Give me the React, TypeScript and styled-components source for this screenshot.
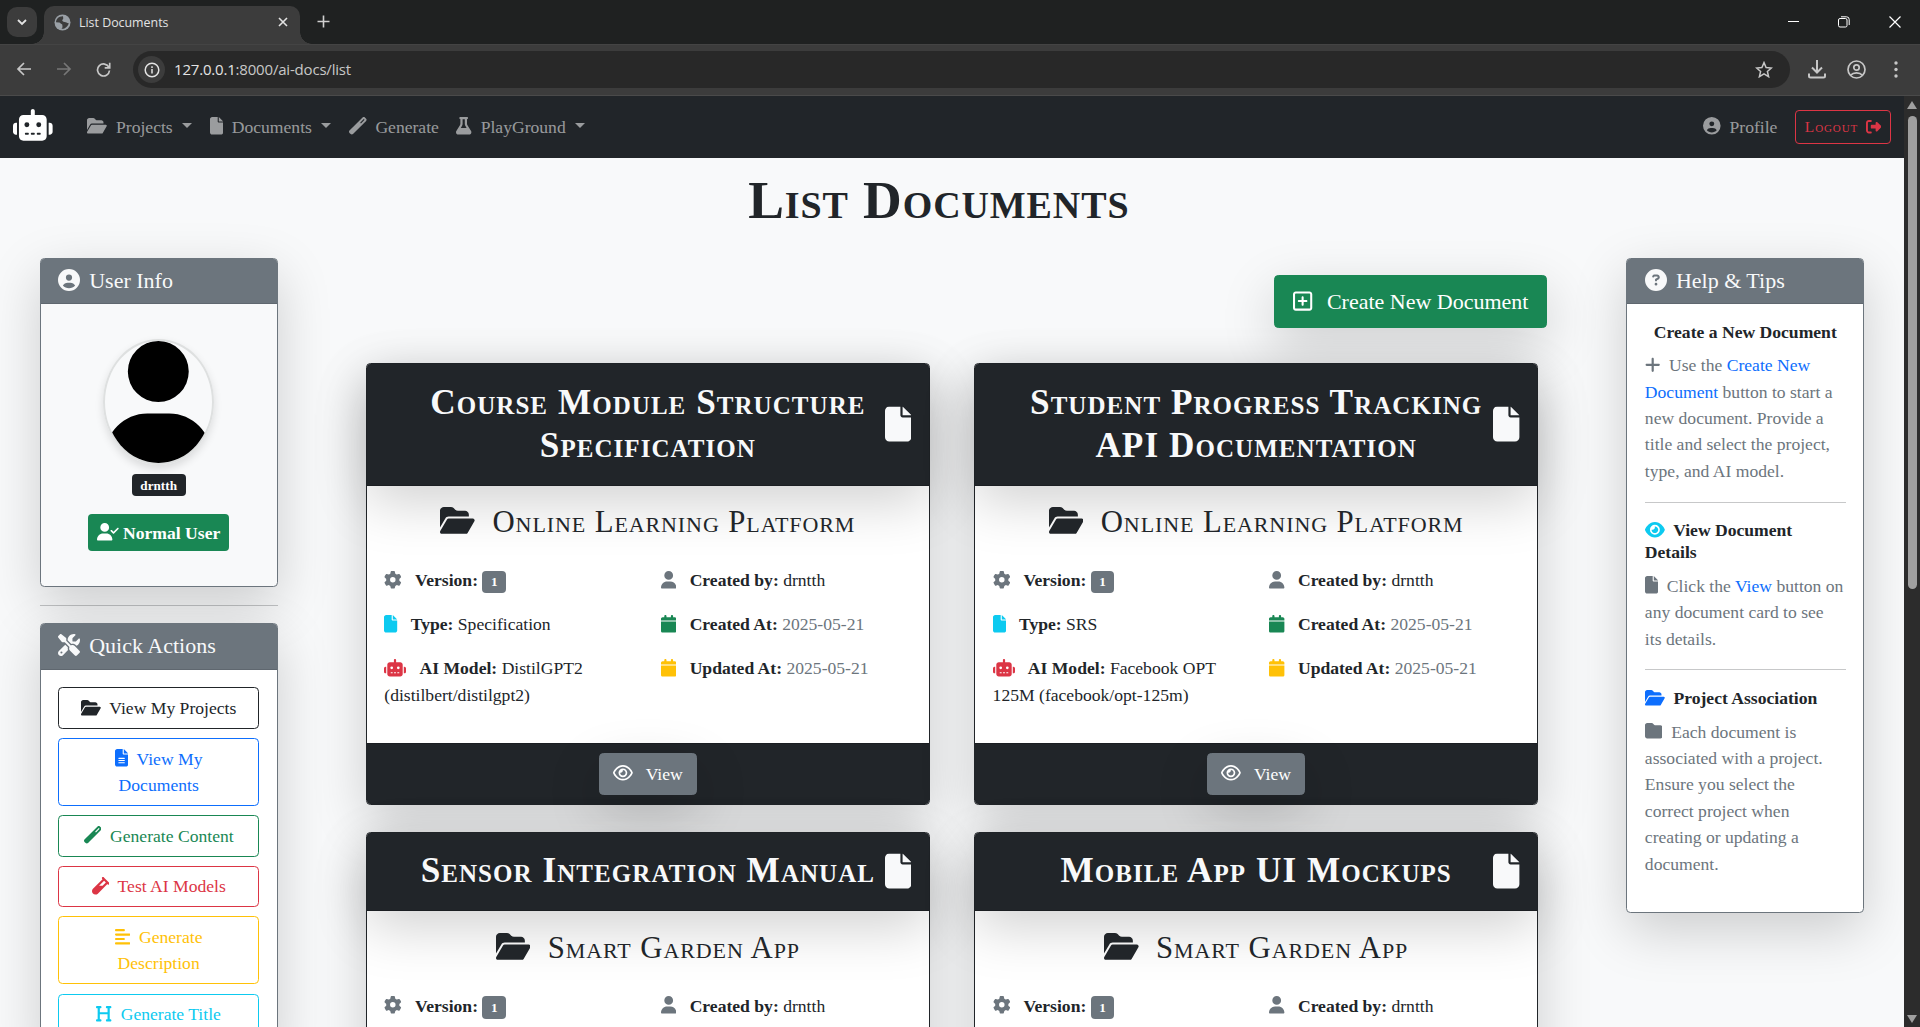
import React from "react";
import styled, { createGlobalStyle, css } from "styled-components";
import {
  FaAlignLeft, FaCalendar, FaCircleQuestion, FaCircleUser, FaEye, FaFile, FaFileLines, FaFlask,
  FaFolder, FaFolderOpen, FaGear, FaHeading, FaPlus, FaRegEye, FaRegSquarePlus, FaRightFromBracket,
  FaRobot, FaScrewdriverWrench, FaUser, FaUserCheck, FaVial, FaWandMagic,
} from "react-icons/fa6";

const dark = "#212529";
const secondary = "#6c757d";
const green = "#198754";
const blue = "#0d6efd";
const red = "#dc3545";
const yellow = "#ffc107";
const cyan = "#0dcaf0";
const light = "#f8f9fa";

const shadowLg = css`
  box-shadow: 0 1rem 3rem rgba(0, 0, 0, 0.175);
`;

const Global = createGlobalStyle`
  *, *::before, *::after { box-sizing: border-box; }
  html { font-size: 17.6px; }
  body {
    margin: 0;
    overflow: hidden;
    font-family: "Liberation Serif", "Times New Roman", serif;
    font-size: 1rem;
    line-height: 1.5;
    color: ${dark};
    background: ${light};
  }
  h1, h2, h3, h4, h5, p, hr { margin: 0; font-weight: 400; line-height: 1.2; }
  p { line-height: 1.5; }
`;

const Window = styled.div`
  height: 1027px;
  display: flex;
  flex-direction: column;
  overflow: hidden;
`;

/* ---------- browser chrome ---------- */

const TabStrip = styled.div`
  flex: none;
  height: 44px;
  display: flex;
  align-items: flex-start;
  background: #1f2121;
  padding-left: 7px;
  color: #e3e3e3;
  font-family: "Open Sans", "Noto Sans", sans-serif;
`;

const TabSearch = styled.div`
  width: 30px;
  height: 30px;
  margin-top: 7px;
  border-radius: 10px;
  background: #3c3c3c;
  display: grid;
  place-items: center;
`;

const Tab = styled.div`
  position: relative;
  width: 256px;
  height: 38px;
  margin: 6px 0 0 7px;
  padding: 0 12px 6px 10px;
  border-radius: 10px 10px 0 0;
  background: #3c3c3c;
  display: flex;
  align-items: center;
  gap: 8px;
  font-size: 12.4px;
  &::before, &::after {
    content: "";
    position: absolute;
    bottom: 0;
    width: 12px;
    height: 12px;
  }
  &::before {
    left: -12px;
    background: radial-gradient(circle at 0 0, transparent 11.5px, #3c3c3c 12px);
  }
  &::after {
    right: -12px;
    background: radial-gradient(circle at 100% 0, transparent 11.5px, #3c3c3c 12px);
  }
`;

const TabTitle = styled.span`
  flex: 1;
  padding-top: 2px;
`;

const NewTab = styled.div`
  display: flex;
  margin: 15px 0 0 17px;
`;

const WindowControls = styled.div`
  margin-left: auto;
  margin-right: 19px;
  height: 44px;
  display: flex;
  align-items: center;
  gap: 39px;
`;

const Toolbar = styled.div`
  flex: none;
  height: 52px;
  display: flex;
  align-items: center;
  padding: 0 15px 0 16px;
  background: #3c3c3c;
  border-bottom: 1px solid #4a4a4a;
  box-shadow: inset 0 1px 0 #444;
  color: #c7c7c7;
`;

const NavButtons = styled.div`
  display: flex;
  gap: 24px;
  width: 117px;
`;

const AddressBar = styled.div`
  flex: 1;
  height: 37px;
  border-radius: 19px;
  background: #282828;
  display: flex;
  align-items: center;
  padding: 0 17px 0 5px;
  color: #e3e3e3;
  font: 15px/20px "Open Sans", "Noto Sans", sans-serif;
`;

const SiteInfo = styled.span`
  width: 27px;
  height: 27px;
  border-radius: 50%;
  background: #3c3c3c;
  display: grid;
  place-items: center;
  margin-right: 9px;
`;

const Url = styled.span`
  flex: 1;
  letter-spacing: -0.19px;
  padding-bottom: 1px;
  span { color: #c7c7c7; }
`;

const ToolbarActions = styled.div`
  display: flex;
  align-items: center;
  gap: 20px;
  margin-left: 17px;
`;

/* ---------- page ---------- */

const Viewport = styled.div`
  flex: 1;
  min-height: 0;
  display: flex;
`;

const Page = styled.div`
  width: 1904px;
  overflow: hidden;
`;

const ScrollTrack = styled.div`
  width: 16px;
  background: #2c2c2c;
  display: flex;
  flex-direction: column;
  align-items: center;
  padding: 5px 0 4px;
`;

const ScrollThumb = styled.div`
  width: 9px;
  height: 473px;
  margin: 7px 0 auto;
  border-radius: 5px;
  background: #9f9f9f;
`;

const Navbar = styled.nav`
  height: 61.6px;
  background: ${dark};
  color: rgba(255, 255, 255, 0.55);
  display: flex;
  align-items: center;
  padding: 0 13.2px;
`;

const Brand = styled.div`
  display: flex;
  color: #fff;
  font-size: 31.7px;
  margin-right: 25.8px;
`;

/* $w is the width of the icon's 512-unit-high drawing */
const Glyph = styled.span<{ $color?: string; $gap?: number; $w?: number }>`
  color: ${(p) => p.$color || "inherit"};
  margin-right: ${(p) => p.$gap ?? 0.5}rem;
  svg {
    height: 1em;
    width: ${(p) => (p.$w ?? 512) / 512}em;
    vertical-align: -0.125em;
  }
`;

const NavItem = styled.div<{ $caret?: boolean }>`
  padding: 0 0.5rem;
  white-space: nowrap;
  ${(p) =>
    p.$caret &&
    css`
      &::after {
        content: "";
        display: inline-block;
        margin-left: 9.5px;
        vertical-align: 0.255em;
        border-top: 0.3em solid;
        border-left: 0.3em solid transparent;
        border-right: 0.3em solid transparent;
      }
    `}
`;

const NavEnd = styled.div`
  display: flex;
  align-items: center;
  gap: 8.8px;
  margin-left: auto;
`;

const LogoutButton = styled.div`
  height: 34px;
  padding: 4.4px 8.8px;
  border: 1px solid ${red};
  border-radius: 4px;
  color: ${red};
  font-size: 15.4px;
  line-height: 23.1px;
  font-variant: small-caps;
  letter-spacing: 0.9px;
  display: flex;
  align-items: center;
  gap: 7.5px;
`;

const PageTitle = styled.h1`
  margin-top: 11px;
  padding-right: 26.4px;
  text-align: center;
  font-size: 53.6px;
  line-height: 63.4px;
  font-weight: 700;
  font-variant: small-caps;
  letter-spacing: 0.9px;
`;

const Columns = styled.div`
  display: grid;
  grid-template-columns: 317.33px 1fr 317.33px;
  align-items: start;
  margin-top: 26px;
`;

const SideColumn = styled.aside`
  padding: 0 39.6px;
`;

const MainColumn = styled.main`
  padding: 17px 39.6px 0;
`;

const Divider = styled.hr`
  border: 0;
  border-top: 1px solid ${dark};
  opacity: 0.25;
  margin: 1rem 0;
`;

const Card = styled.section<{ $border: string; $bg?: string }>`
  ${shadowLg}
  border: 1px solid ${(p) => p.$border};
  border-radius: 4.4px;
  background: ${(p) => p.$bg || "#fff"};
`;

const SideHeader = styled.h5<{ $h?: number }>`
  height: ${(p) => p.$h ?? 45}px;
  padding: 0.5rem 1rem;
  border-bottom: 1px solid #5f676f;
  background: ${secondary};
  color: ${light};
  font-size: 1.25rem;
  border-radius: 3.4px 3.4px 0 0;
  white-space: nowrap;
`;

const SideBody = styled.div`
  padding: 1rem;
`;

const Profile = styled.div`
  height: 282px;
  padding-top: 35px;
  display: flex;
  flex-direction: column;
  align-items: center;
`;

const Avatar = styled.div`
  flex: none;
  width: 110.6px;
  height: 126px;
  margin-bottom: 9px;
  border: 2px solid #dee0e0;
  border-radius: 50%;
  overflow: hidden;
  box-shadow: 0 4px 8px rgba(0, 0, 0, 0.12);
  color: #000;
  svg { display: block; width: 100%; height: 100%; }
`;

const Badge = styled.span<{ $bg: string }>`
  display: inline-block;
  padding: 0.35em 0.65em;
  font-size: 0.75em;
  font-weight: 700;
  line-height: 1;
  color: #fff;
  text-align: center;
  vertical-align: baseline;
  border-radius: 4px;
  background: ${(p) => p.$bg};
`;

const RoleBadge = styled.div`
  margin-top: 18px;
  height: 37px;
  padding: 0 8.8px;
  display: flex;
  align-items: center;
  gap: 4px;
  border-radius: 4px;
  background: ${green};
  color: #fff;
  font-weight: 700;
  white-space: nowrap;
`;

const ActionList = styled.div`
  display: grid;
  gap: 9.1px;
  padding: 1rem;
`;

const OutlineButton = styled.div<{ $color: string }>`
  padding: 0.375rem 0.95rem;
  border: 1px solid ${(p) => p.$color};
  border-radius: 4.4px;
  color: ${(p) => p.$color};
  text-align: center;
`;

const CreateRow = styled.div`
  display: flex;
  justify-content: flex-end;
  margin-bottom: 35.2px;
`;

const CreateButton = styled.div`
  ${shadowLg}
  padding: 0.5rem 1rem 0.5rem 18.4px;
  border: 1px solid ${green};
  border-radius: 4.4px;
  background: ${green};
  color: #fff;
  font-size: 1.25rem;
  line-height: 33.4px;
  white-space: nowrap;
`;

const CardGrid = styled.div`
  display: grid;
  grid-template-columns: 1fr 1fr;
  gap: 26.4px 44px;
  margin: 0 8.8px;
`;

const DocHeader = styled.header`
  ${shadowLg}
  position: relative;
  padding: 17.8px 1rem 17px;
  border-bottom: 1px solid #1b1e22;
  border-radius: 3.4px 3.4px 0 0;
  background: ${dark};
  color: ${light};
`;

const DocTitle = styled.h2`
  padding: 0 10px;
  font-size: 2rem;
  line-height: 42.9px;
  font-weight: 700;
  font-variant: small-caps;
  letter-spacing: 1.05px;
  text-align: center;
`;

const CornerIcon = styled.span`
  position: absolute;
  top: 50%;
  right: 1rem;
  transform: translateY(-50%);
  display: flex;
  font-size: 2rem;
  svg { height: 1em; width: 0.75em; }
`;

const DocBody = styled.div`
  position: relative;
  padding: 1rem;
`;

const ProjectName = styled.h3`
  font-size: 1.75rem;
  line-height: 38px;
  font-variant: small-caps;
  letter-spacing: 0.9px;
  text-align: center;
  margin-bottom: 26px;
`;

const MetaGrid = styled.div`
  display: grid;
  grid-template-columns: 1fr 1fr;
  column-gap: 26.4px;
`;

const Meta = styled.p`
  margin-bottom: 1rem;
`;

const Muted = styled.span`
  color: ${secondary};
`;

const DocFooter = styled.footer`
  padding: 0.5rem 1rem;
  border-top: 1px solid #1b1e22;
  border-radius: 0 0 3.4px 3.4px;
  background: ${dark};
  display: flex;
  justify-content: center;
`;

const ViewButton = styled.div`
  ${shadowLg}
  padding: 0.375rem 0.75rem;
  border: 1px solid ${secondary};
  border-radius: 4.4px;
  background: ${secondary};
  color: #fff;
  line-height: 27px;
`;

const TipTitle = styled.h5<{ $indent?: boolean }>`
  font-weight: 700;
  font-size: 1rem;
  line-height: 21.8px;
  margin-bottom: 0.5rem;
  padding-left: ${(p) => (p.$indent ? "9px" : 0)};
`;

const TipText = styled.p`
  color: ${secondary};
  margin-bottom: 1rem;
`;

const Link = styled.span`
  color: ${blue};
`;

/* ---------- data ---------- */

type Doc = { title: string; project: string; type: string; model: string };

const docs: Doc[] = [
  { title: "Course Module Structure Specification", project: "Online Learning Platform", type: "Specification", model: "DistilGPT2 (distilbert/distilgpt2)" },
  { title: "Student Progress Tracking API Documentation", project: "Online Learning Platform", type: "SRS", model: "Facebook OPT 125M (facebook/opt-125m)" },
  { title: "Sensor Integration Manual", project: "Smart Garden App", type: "Manual", model: "DistilGPT2 (distilbert/distilgpt2)" },
  { title: "Mobile App UI Mockups", project: "Smart Garden App", type: "Design", model: "DistilGPT2 (distilbert/distilgpt2)" },
];

const actions = [
  { label: "View My Projects", color: dark, icon: <FaFolderOpen />, w: 576 },
  { label: "View My Documents", color: blue, icon: <FaFileLines />, w: 384 },
  { label: "Generate Content", color: green, icon: <FaWandMagic />, w: 512 },
  { label: "Test AI Models", color: red, icon: <FaVial />, w: 512 },
  { label: "Generate Description", color: yellow, icon: <FaAlignLeft />, w: 448 },
  { label: "Generate Title", color: cyan, icon: <FaHeading />, w: 448 },
];

function DocumentCard({ doc }: { doc: Doc }) {
  return (
    <Card $border={dark}>
      <DocHeader>
        <DocTitle>{doc.title}</DocTitle>
        <CornerIcon><FaFile /></CornerIcon>
      </DocHeader>
      <DocBody>
        <ProjectName><Glyph $w={576}><FaFolderOpen /></Glyph> {doc.project}</ProjectName>
        <MetaGrid>
          <div>
            <Meta><Glyph $color={secondary}><FaGear /></Glyph> <b>Version:</b> <Badge $bg={secondary}>1</Badge></Meta>
            <Meta><Glyph $w={384} $color={cyan}><FaFile /></Glyph> <b>Type:</b> {doc.type}</Meta>
            <Meta><Glyph $w={640} $color={red}><FaRobot /></Glyph> <b>AI Model:</b> {doc.model}</Meta>
          </div>
          <div>
            <Meta><Glyph $w={448} $color={secondary}><FaUser /></Glyph> <b>Created by:</b> drntth</Meta>
            <Meta><Glyph $w={448} $color={green}><FaCalendar /></Glyph> <b>Created At:</b> <Muted>2025-05-21</Muted></Meta>
            <Meta><Glyph $w={448} $color={yellow}><FaCalendar /></Glyph> <b>Updated At:</b> <Muted>2025-05-21</Muted></Meta>
          </div>
        </MetaGrid>
      </DocBody>
      <DocFooter>
        <ViewButton><Glyph $w={576}><FaRegEye /></Glyph> View</ViewButton>
      </DocFooter>
    </Card>
  );
}

function BrowserChrome() {
  return (
    <>
      <TabStrip>
        <TabSearch>
          <svg width="10" height="7" viewBox="0 0 10 7" fill="none" stroke="#e3e3e3" strokeWidth="1.8"><path d="M1 1l4 4 4-4" /></svg>
        </TabSearch>
        <Tab>
          <svg width="17" height="17" viewBox="0 0 17 17">
            <circle cx="8.5" cy="8.5" r="8" fill="#9aa0a6" />
            <path d="M9 2.2C5 2 2 5 2 8.3l3.200 .3c1.300 .2 1.200 1.400 2.400 1.500 1.200 .2.600 1.800.9 2.600.2.800-.5 1.300-1 2.100C11 15.300 14 12 14.800 9.200c-1.800.2-2.600-1-4.200-1.100C9 8 8 7 8.200 5.800 9.500 5.800 9.300 3.800 9 2.200z" fill="#3c3c3c" />
          </svg>
          <TabTitle>List Documents</TabTitle>
          <svg width="10" height="10" viewBox="0 0 10 10" stroke="#e3e3e3" strokeWidth="1.6"><path d="M1 1l8 8M9 1l-8 8" /></svg>
        </Tab>
        <NewTab>
          <svg width="13" height="13" viewBox="0 0 13 13" stroke="#d0d0d0" strokeWidth="1.6"><path d="M6.500 .5v12M.5 6.500h12" /></svg>
        </NewTab>
        <WindowControls>
          <svg width="11" height="11" viewBox="0 0 11 11" stroke="#fff"><path d="M0 4.500h11" /></svg>
          <svg width="12" height="12" viewBox="0 0 12 12" fill="none" stroke="#fff"><rect x=".5" y="2.500" width="8.500" height="8.500" rx="1.500" /><path d="M3 .8h5.500a2.700 2.700 0 0 1 2.700 2.700V9" /></svg>
          <svg width="12" height="12" viewBox="0 0 12 12" stroke="#fff" strokeWidth="1.200"><path d="M.5 .5l11 11M11.500 .5l-11 11" /></svg>
        </WindowControls>
      </TabStrip>
      <Toolbar>
        <NavButtons>
          <svg width="16" height="14" viewBox="0 0 16 14" fill="none" stroke="#c7c7c7" strokeWidth="1.700"><path d="M15 7H2M8 1L2 7l6 6" /></svg>
          <svg width="16" height="14" viewBox="0 0 16 14" fill="none" stroke="#777" strokeWidth="1.700"><path d="M1 7h13M8 1l6 6-6 6" /></svg>
          <svg width="15" height="15" viewBox="0 0 15 15" fill="none" stroke="#c7c7c7" strokeWidth="1.700"><path d="M13 5.500A6 6 0 1 0 13.500 8.500M13.700 .8v5H8.700" /></svg>
        </NavButtons>
        <AddressBar>
          <SiteInfo>
            <svg width="16" height="16" viewBox="0 0 16 16" fill="none" stroke="#e3e3e3" strokeWidth="1.500"><circle cx="8" cy="8" r="6.800" /><path d="M8 7v4.500M8 4.300v1.600" /></svg>
          </SiteInfo>
          <Url>127.0.0.1<span>:8000/ai-docs/list</span></Url>
          <svg width="18" height="17" viewBox="0 0 18 17" fill="none" stroke="#c7c7c7" strokeWidth="1.500"><path d="M9 1.600l2.100 4.900 5.300.5-4 3.500 1.200 5.200L9 12.900l-4.600 2.800 1.200-5.200-4-3.500 5.300-.5z" /></svg>
        </AddressBar>
        <ToolbarActions>
          <svg width="20" height="19" viewBox="0 0 20 19" fill="none" stroke="#c7c7c7" strokeWidth="2"><path d="M10 0v12M5 7.500l5 5 5-5M2 13.500v2.600a1.500 1.500 0 0 0 1.500 1.500h13a1.500 1.500 0 0 0 1.500-1.500v-2.600" /></svg>
          <svg width="19" height="19" viewBox="0 0 19 19" fill="none" stroke="#c7c7c7" strokeWidth="1.700"><circle cx="9.500" cy="9.500" r="8.500" /><circle cx="9.500" cy="7.500" r="2.700" /><path d="M3.500 15.300c3-3.300 9-3.300 12 0" /></svg>
          <svg width="19" height="17" viewBox="0 0 19 17" fill="#c7c7c7"><circle cx="10" cy="2" r="1.700" /><circle cx="10" cy="8.500" r="1.700" /><circle cx="10" cy="15" r="1.700" /></svg>
        </ToolbarActions>
      </Toolbar>
    </>
  );
}

export default function App() {
  return (
    <Window>
      <Global />
      <BrowserChrome />
      <Viewport>
        <Page>
          <Navbar>
            <Brand><Glyph $gap={0} $w={640}><FaRobot /></Glyph></Brand>
            <NavItem $caret><Glyph $w={576}><FaFolderOpen /></Glyph>Projects</NavItem>
            <NavItem $caret><Glyph $w={384}><FaFile /></Glyph>Documents</NavItem>
            <NavItem><Glyph><FaWandMagic /></Glyph>Generate</NavItem>
            <NavItem $caret><Glyph $w={448}><FaFlask /></Glyph>PlayGround</NavItem>
            <NavEnd>
              <NavItem><Glyph><FaCircleUser /></Glyph>Profile</NavItem>
              <LogoutButton>Logout <Glyph $gap={0}><FaRightFromBracket /></Glyph></LogoutButton>
            </NavEnd>
          </Navbar>
          <PageTitle>List Documents</PageTitle>
          <Columns>
            <SideColumn>
              <Card $border={secondary} $bg={light}>
                <SideHeader><Glyph $gap={0.2}><FaCircleUser /></Glyph> User Info</SideHeader>
                <Profile>
                  <Avatar>
                    <svg viewBox="0 0 448 512" preserveAspectRatio="none"><path d="M224 256A128 128 0 1 0 224 0a128 128 0 1 0 0 256zm-45.700 48C79.800 304 0 383.800 0 482.300C0 498.700 13.300 512 29.700 512H418.300c16.400 0 29.700-13.300 29.700-29.700C448 383.800 368.200 304 269.700 304H178.300z" /></svg>
                  </Avatar>
                  <Badge $bg={dark}>drntth</Badge>
                  <RoleBadge><Glyph $gap={0} $w={640}><FaUserCheck /></Glyph>Normal User</RoleBadge>
                </Profile>
              </Card>
              <Divider />
              <Card $border={secondary}>
                <SideHeader $h={45.6}><Glyph $gap={0.2}><FaScrewdriverWrench /></Glyph> Quick Actions</SideHeader>
                <ActionList>
                  {actions.map((a) => (
                    <OutlineButton key={a.label} $color={a.color}><Glyph $gap={0.25} $w={a.w}>{a.icon}</Glyph> {a.label}</OutlineButton>
                  ))}
                </ActionList>
              </Card>
            </SideColumn>
            <MainColumn>
              <CreateRow>
                <CreateButton><Glyph $w={448}><FaRegSquarePlus /></Glyph> Create New Document</CreateButton>
              </CreateRow>
              <CardGrid>
                {docs.map((d) => <DocumentCard key={d.title} doc={d} />)}
              </CardGrid>
            </MainColumn>
            <SideColumn>
              <Card $border={secondary}>
                <SideHeader><Glyph $gap={0.2}><FaCircleQuestion /></Glyph> Help &amp; Tips</SideHeader>
                <SideBody>
                  <TipTitle $indent>Create a New Document</TipTitle>
                  <TipText><Glyph $gap={0.25} $w={448}><FaPlus /></Glyph> Use the <Link>Create New Document</Link> button to start a new document. Provide a title and select the project, type, and AI model.</TipText>
                  <Divider />
                  <TipTitle><Glyph $gap={0.25} $w={576} $color={cyan}><FaEye /></Glyph> View Document Details</TipTitle>
                  <TipText><Glyph $gap={0.25} $w={384}><FaFile /></Glyph> Click the <Link>View</Link> button on any document card to see <br />its details.</TipText>
                  <Divider />
                  <TipTitle><Glyph $gap={0.25} $w={576} $color={blue}><FaFolderOpen /></Glyph> Project Association</TipTitle>
                  <TipText><Glyph $gap={0.25}><FaFolder /></Glyph> Each document is associated with a project. Ensure you select the correct project when creating or updating a document.</TipText>
                </SideBody>
              </Card>
            </SideColumn>
          </Columns>
        </Page>
        <ScrollTrack>
          <svg width="10" height="8" viewBox="0 0 10 8" fill="#9f9f9f"><path d="M5 0l5 8H0z" /></svg>
          <ScrollThumb />
          <svg width="10" height="8" viewBox="0 0 10 8" fill="#9f9f9f"><path d="M5 8l5-8H0z" /></svg>
        </ScrollTrack>
      </Viewport>
    </Window>
  );
}
